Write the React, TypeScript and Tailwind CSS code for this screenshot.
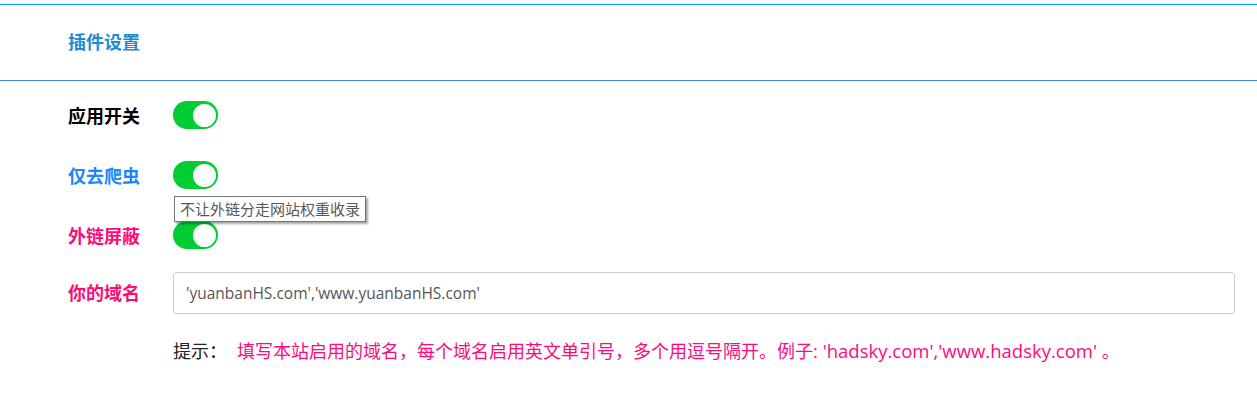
import React from 'react';

const font = { fontFamily: '"Open Sans", "Noto Sans CJK SC", sans-serif' };

const Toggle: React.FC<{ children?: React.ReactNode }> = ({ children }) => (
    <div className="relative">
        <div className="w-[45px] h-[28px] rounded-full bg-[#00cc33] flex items-center justify-end pr-[2px]">
            <div className="w-[23px] h-[23px] rounded-full bg-white"></div>
        </div>
        {children}
    </div>
);

const Row: React.FC<{ label: string; color: string; children: React.ReactNode; h: string }> = ({ label, color, children, h }) => (
    <div className={`flex items-center ${h}`}>
        <div className={`w-[105px] pt-[2px] text-[18px] font-bold ${color}`}>{label}</div>
        {children}
    </div>
);

const App: React.FC = () => {
    return (
        <div className="pt-[4px] bg-white w-[1257px] h-[419px]" style={font}>
            <div className="h-[77px] border-t border-b border-t-[#0099ff] border-b-[#3a92e0] flex items-center pl-[68px]">
                <h2 className="text-[18px] font-bold text-[#1f8ad8]">插件设置</h2>
            </div>
            <div className="pl-[68px] pr-[22px] pt-[4px]">
                <Row label="应用开关" color="text-black" h="h-[60px]">
                    <Toggle />
                </Row>
                <Row label="仅去爬虫" color="text-[#1a86ff]" h="h-[60px]">
                    <Toggle>
                        <div className="absolute left-[1px] top-[35px] z-10 whitespace-nowrap bg-white border border-[#767676] px-[5px] h-[26px] flex items-center text-[15px] text-[#575757] shadow-[2px_2px_2px_rgba(0,0,0,0.35)]">
                            不让外链分走网站权重收录
                        </div>
                    </Toggle>
                </Row>
                <Row label="外链屏蔽" color="text-[#ff0a78]" h="h-[60px]">
                    <Toggle />
                </Row>
                <Row label="你的域名" color="text-[#ff0a78]" h="h-[55px]">
                    <input
                        readOnly
                        value="'yuanbanHS.com','www.yuanbanHS.com'"
                        className="flex-1 h-[42px] border border-[#cccccc] rounded-[3px] pl-[12px] text-[15.5px] text-[#555555] outline-none"
                        style={font}
                    />
                </Row>
                <div className="flex items-center h-[62px] pl-[105px] text-[18px]">
                    <span className="text-[#222222]">提示：</span>
                    <span className="ml-[10px] text-[#ff0a78]">
                        填写本站启用的域名，每个域名启用英文单引号，多个用逗号隔开。例子<span className="text-[18.5px]">: 'hadsky.com','www.hadsky.com' </span>。
                    </span>
                </div>
            </div>
        </div>
    );
};

export default App;
